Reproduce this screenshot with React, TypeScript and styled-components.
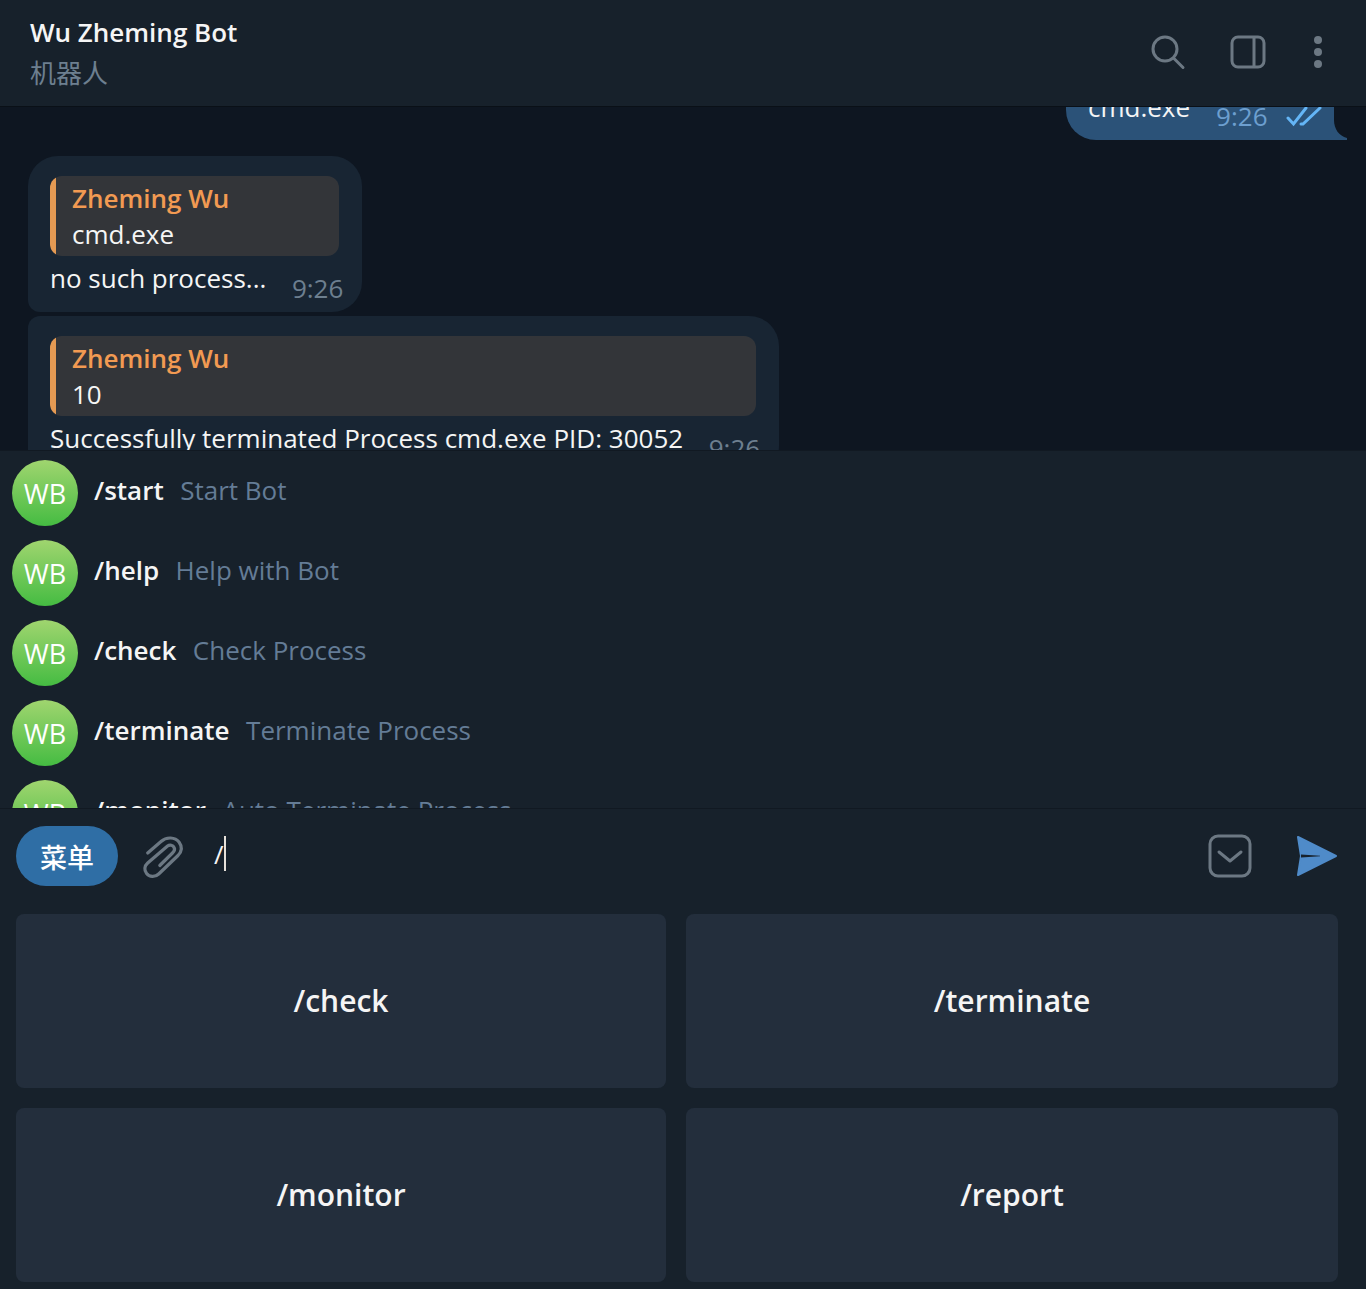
import React from 'react';
import styled, { createGlobalStyle } from 'styled-components';

const GlobalStyle = createGlobalStyle`
  html, body {
    margin: 0;
    padding: 0;
    background: #17212b;
    font-family: "Open Sans", "Noto Sans CJK SC", sans-serif;
    font-size: 26px;
    color: #f5f5f5;
  }
  * { box-sizing: border-box; }
`;

const Window = styled.div`
  width: 1366px;
  height: 1289px;
  display: flex;
  flex-direction: column;
  overflow: hidden;
  background: #17212b;
`;

const Header = styled.header`
  height: 107px;
  flex: none;
  display: flex;
  align-items: center;
  justify-content: space-between;
  padding: 0 36px 0 30px;
  background: #17212b;
  border-bottom: 1px solid #0a1017;
`;

const TitleBlock = styled.div`
  align-self: flex-start;
  display: flex;
  flex-direction: column;
  padding-top: 12px;
`;

const Title = styled.div`
  font-weight: 600;
  line-height: 40px;
  color: #f5f5f5;
`;

const Subtitle = styled.div`
  margin-top: 1px;
  line-height: 40px;
  color: #6d7f8f;
`;

const HeaderIcons = styled.div`
  display: flex;
  align-items: center;
  margin-bottom: 2px;
`;

const IconSlot = styled.div<{ $mr?: number }>`
  display: flex;
  margin-right: ${(p) => p.$mr ?? 0}px;
`;

const Messages = styled.div`
  height: 343px;
  flex: none;
  overflow: hidden;
  background: #0e1621;
`;

const MessageList = styled.div`
  display: flex;
  flex-direction: column;
  gap: 4px;
  margin-top: -46px;
  padding: 0 20px 0 28px;
`;

const Bubble = styled.div<{ $first?: boolean }>`
  align-self: flex-start;
  padding: 20px 18.4px 0 22px;
  height: ${(p) => (p.$first ? '156px' : '160px')};
  background: #182533;
  border-radius: ${(p) => (p.$first ? '30px 30px 30px 12px' : '12px 30px 30px 12px')};
`;

const OutBubble = styled.div`
  position: relative;
  align-self: flex-end;
  width: 268px;
  height: 79px;
  margin-right: 12px;
  margin-bottom: 12px;
  padding: 28px 0 0 22px;
  display: flex;
  background: #2b5278;
  border-radius: 30px 30px 0 30px;
`;

const Tail = styled.svg`
  position: absolute;
  right: -13px;
  bottom: 0;
`;

const OutText = styled.span`
  line-height: 36px;
`;

const OutTime = styled.span`
  margin: 9px 0 0 26px;
  line-height: 36px;
  color: #6d9fcf;
`;

const OutChecks = styled.svg`
  position: absolute;
  right: 12px;
  bottom: 13px;
`;

const Reply = styled.div`
  margin-right: 4px;
  height: 80px;
  padding: 4px 0 0 22px;
  background: linear-gradient(to right, #e59a53 6px, #333539 6px);
  border-radius: 12px;
`;

const ReplyName = styled.div`
  line-height: 36px;
  font-weight: 600;
  color: #f29a52;
`;

const ReplyText = styled.div`
  line-height: 36px;
`;

const Body = styled.div`
  display: flex;
  margin-top: 4px;
`;

const BodyText = styled.span`
  line-height: 36px;
  white-space: nowrap;
`;

const Time = styled.span`
  margin: 10px 0 0 25.6px;
  line-height: 36px;
  color: #6d7f8f;
`;

const Commands = styled.div`
  height: 359px;
  flex: none;
  overflow: hidden;
  padding-top: 2px;
  background: #17212b;
  border-top: 1px solid #111922;
  border-bottom: 1px solid #111922;
`;

const CommandRow = styled.div`
  height: 80px;
  display: flex;
  align-items: center;
  padding: 0 12px;
`;

const Avatar = styled.div`
  width: 66px;
  height: 66px;
  flex: none;
  margin-right: 16px;
  display: flex;
  align-items: center;
  justify-content: center;
  border-radius: 50%;
  background: linear-gradient(#a0d56f, #45bc42);
  font-size: 27px;
  font-weight: 500;
  color: #fff;
`;

const CommandName = styled.span`
  margin: -6px 16.500px 0 0;
  font-weight: 600;
  color: #f5f5f5;
`;

const CommandHint = styled.span`
  margin-top: -6px;
  color: #647c96;
`;

const Compose = styled.div`
  height: 105px;
  flex: none;
  display: flex;
  align-items: flex-start;
  padding: 17px 28px 0 16px;
`;

const MenuButton = styled.button`
  width: 102px;
  height: 60px;
  border: none;
  border-radius: 30px;
  background: #2f6ea5;
  color: #fff;
  font-family: inherit;
  font-size: 27px;
  font-weight: 500;
`;

const AttachIcon = styled.svg`
  margin: 4px 0 0 17px;
`;

const InputText = styled.div`
  flex: 1;
  display: flex;
  margin: 10px 0 0 24px;
  height: 36px;
  line-height: 36px;
`;

const Caret = styled.i`
  width: 2px;
  height: 35px;
  background: #e6e1da;
`;

const FaceIcon = styled.svg`
  margin: 8px 44px 0 0;
`;

const SendIcon = styled.svg`
  margin-top: 9px;
`;

const Keyboard = styled.div`
  flex: 1;
  display: grid;
  grid-template-columns: 650px 652px;
  grid-auto-rows: 174px;
  gap: 20px;
  padding: 0 0 0 16px;
`;

const KeyButton = styled.button`
  padding: 0 0 2px;
  border: none;
  border-radius: 8px;
  background: #232e3c;
  color: #f5f5f5;
  font-family: inherit;
  font-size: 30px;
  font-weight: 600;
`;

const commands = [
  ['/start', 'Start Bot'],
  ['/help', 'Help with Bot'],
  ['/check', 'Check Process'],
  ['/terminate', 'Terminate Process'],
  ['/monitor', 'Auto Terminate Process'],
];

const keys = ['/check', '/terminate', '/monitor', '/report'];

const Quote: React.FC<{ text: string }> = ({ text }) => (
  <Reply>
    <ReplyName>Zheming Wu</ReplyName>
    <ReplyText>{text}</ReplyText>
  </Reply>
);

export default function App() {
  return (
    <Window>
      <GlobalStyle />
      <Header>
        <TitleBlock>
          <Title>Wu Zheming Bot</Title>
          <Subtitle>机器人</Subtitle>
        </TitleBlock>
        <HeaderIcons>
          <IconSlot $mr={44}>
            <svg width="36" height="36" viewBox="0 0 36 36" fill="none" stroke="#6c7883" strokeWidth="3">
              <circle cx="15" cy="15" r="12" />
              <path d="M23.5 24 33 33.500" strokeLinecap="round" />
            </svg>
          </IconSlot>
          <IconSlot $mr={40}>
            <svg width="36" height="36" viewBox="0 0 36 36" fill="none" stroke="#6c7883" strokeWidth="3">
              <rect x="2" y="3" width="32" height="30" rx="6" />
              <path d="M24 3v30" />
            </svg>
          </IconSlot>
          <IconSlot>
            <svg width="24" height="36" viewBox="0 0 24 36" fill="#6c7883">
              <circle cx="12" cy="6" r="4" />
              <circle cx="12" cy="18" r="4" />
              <circle cx="12" cy="30" r="4" />
            </svg>
          </IconSlot>
        </HeaderIcons>
      </Header>

      <Messages>
        <MessageList>
          <OutBubble>
            <OutText>cmd.exe</OutText>
            <OutTime>9:26</OutTime>
            <OutChecks width="36" height="20" viewBox="0 0 36 20" fill="none" stroke="#64b5f6" strokeWidth="3" strokeLinecap="round">
              <path d="M2 11 7.500 17 20 1" />
              <path d="M15 17 17 17 34 1" />
            </OutChecks>
            <Tail width="13" height="20" viewBox="0 0 13 20" fill="#2b5278">
              <path d="M0 0C0 9 5 16 13 18V20H0Z" />
            </Tail>
          </OutBubble>
          <Bubble $first>
            <Quote text="cmd.exe" />
            <Body>
              <BodyText>no such process...</BodyText>
              <Time>9:26</Time>
            </Body>
          </Bubble>
          <Bubble>
            <Quote text="10" />
            <Body>
              <BodyText>Successfully terminated Process cmd.exe PID: 30052</BodyText>
              <Time>9:26</Time>
            </Body>
          </Bubble>
        </MessageList>
      </Messages>

      <Commands>
        {commands.map(([name, hint]) => (
          <CommandRow key={name}>
            <Avatar>WB</Avatar>
            <CommandName>{name}</CommandName>
            <CommandHint>{hint}</CommandHint>
          </CommandRow>
        ))}
      </Commands>

      <Compose>
        <MenuButton>菜单</MenuButton>
        <AttachIcon width="55" height="55" viewBox="0 0 55 55" fill="none" stroke="#6c7883" strokeWidth="3.200" strokeLinecap="round">
          <path d="M12.700 23 26 11.500C31.400 6.500 40.200 7 44 12C47.300 16.500 46.800 21.500 43 25.500L23.700 44C19.900 47.500 14.400 47 11.600 43.500C8.900 40 9.400 36 12.700 33L32.500 16C34.700 14.500 38 15 39.100 17.500C40.200 19.500 39.100 21.500 37.500 23L24.800 35.500" />
        </AttachIcon>
        <InputText>
          /<Caret />
        </InputText>
        <FaceIcon width="44" height="44" viewBox="0 0 44 44" fill="none" stroke="#6c7883" strokeWidth="3">
          <rect x="2" y="2" width="40" height="40" rx="8" />
          <path d="M11 18 22 27 33 18" strokeLinecap="round" strokeLinejoin="round" />
        </FaceIcon>
        <SendIcon width="42" height="42" viewBox="0 0 42 42">
          <path d="M2 2 40 21 2 40 5 21Z" fill="#4f8bc9" stroke="#4f8bc9" strokeWidth="2" strokeLinejoin="round" />
          <path d="M5 19.500 24 20.700V21.300L5 22.500Z" fill="#17212b" />
        </SendIcon>
      </Compose>

      <Keyboard>
        {keys.map((k) => (
          <KeyButton key={k}>{k}</KeyButton>
        ))}
      </Keyboard>
    </Window>
  );
}
